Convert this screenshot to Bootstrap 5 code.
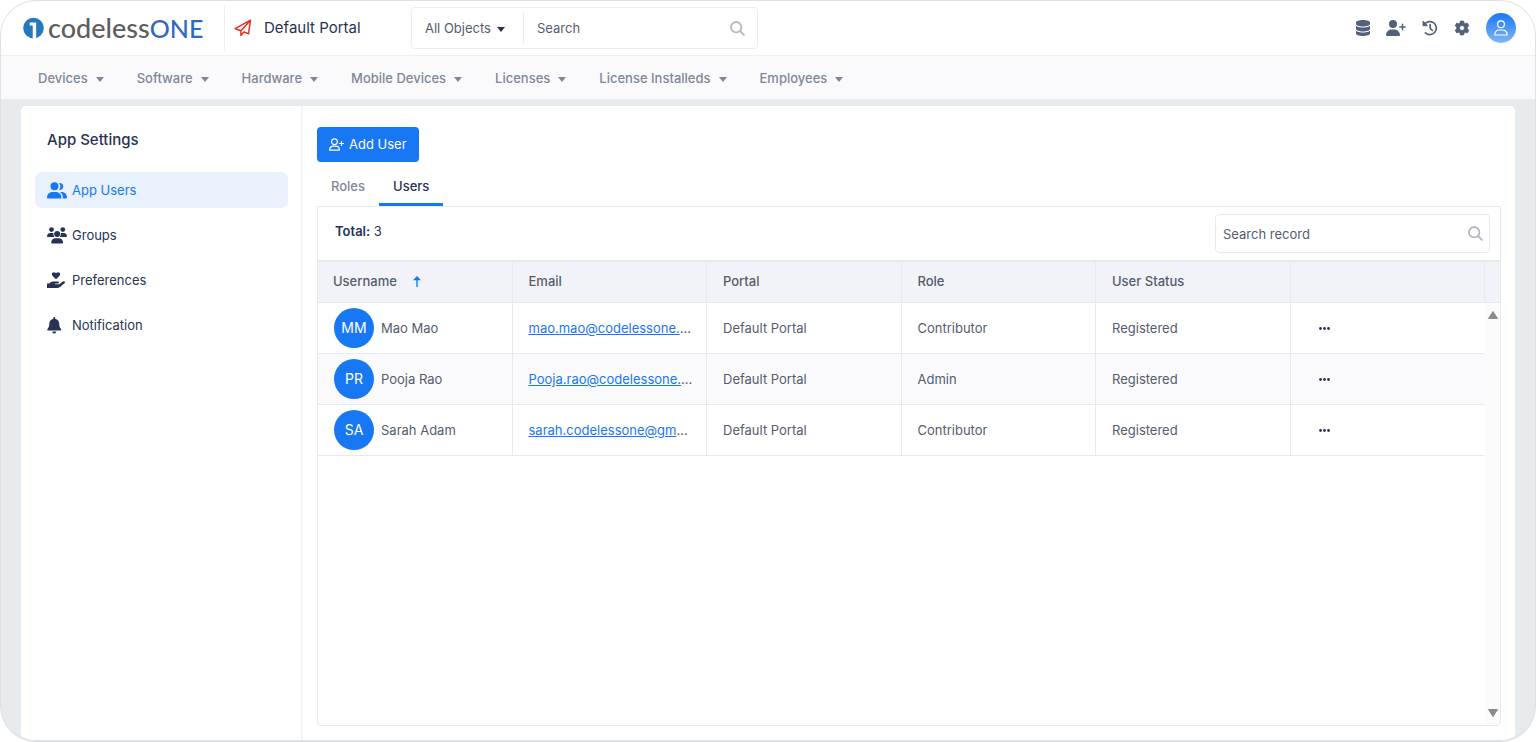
<!DOCTYPE html>
<html lang="en">
<head>
<meta charset="utf-8">
<meta name="viewport" content="width=device-width, initial-scale=1">
<title>App Users</title>
<link href="https://cdn.jsdelivr.net/npm/bootstrap@5.3.0/dist/css/bootstrap.min.css" rel="stylesheet">
<style>
  :root { --ink: #283353; --body: #555c6e; --muted: #7f8798; --line: #e6e9ed; --blue: #1877f2; }
  body { font-family: Inter, "Liberation Sans", sans-serif; font-size: 13px; line-height: 20px; color: var(--body); background: #fff; }
  svg { display: block; flex: none; }
  .app-frame { min-height: 100vh; background: #e7ebed; border: 1px solid #dfe1e3; border-bottom-width: 2px; border-radius: 36px; overflow: hidden; }
  .top-bar { height: 55px; background: #fff; border-bottom: 1px solid #f0f0f3; padding: 0 19px 0 22px; }
  .brand { width: 201px; font-family: Lato, sans-serif; font-size: 27px; line-height: 32px; font-weight: 500; color: #5c5e60; text-decoration: none; }
  .brand b { font-size: 25px; font-weight: 500; color: #2f69c0; }
  .portal { height: 46px; border-left: 1px solid #efeff2; padding-left: 9px; gap: 12px; font-size: 15px; color: var(--ink); width: 187px; text-decoration: none; }
  .finder { width: 347px; height: 42px; border: 1px solid #ececef; border-radius: 4px; }
  .finder .btn { width: 112px; flex: none; height: 32px; border: 0; border-right: 1px solid #ececef; border-radius: 0; padding: 0 0 0 13px; font-size: 13px; line-height: 32px; color: var(--body); text-align: left; }
  .dropdown-toggle::after { border-width: 5px 4px 0; vertical-align: 1px; }
  .finder .btn::after { color: var(--ink); margin-left: 6px; }
  .plain-input { border: 0; outline: 0; background: none; min-width: 0; font-size: 13px; color: var(--body); }
  .plain-input::placeholder { color: var(--body); opacity: 1; }
  .finder .plain-input { padding-left: 13px; }
  .icon-btn { border: 0; background: none; padding: 0; color: #536079; }
  .face { width: 30px; height: 30px; border-radius: 50%; background: linear-gradient(#1877f2, #82b6f8); color: #fff; }
  .menu-bar { height: 43px; background: #fafafc; padding-left: 37px; gap: 33px; }
  .menu-bar a { color: var(--muted); font-weight: 500; text-decoration: none; white-space: nowrap; }
  .menu-bar a::after { margin-left: 8px; }
  .sheet { margin: 7px 20px 0; background: #fff; border-radius: 5px 5px 0 0; }
  .side { width: 282px; border-right: 2px solid #f5f6f8; padding: 22px 13px 22px 14px; }
  .side h1 { font-size: 15px; line-height: 24px; font-weight: 500; color: var(--ink); margin: 0 0 20px 12px; }
  .side a { height: 36px; padding-left: 12px; gap: 5px; border-radius: 7px; color: var(--ink); text-decoration: none; }
  .side a.active { background: #e8f1fc; color: var(--blue); }
  .side nav { gap: 9px; }
  .work { padding: 21px 14px 14px; min-width: 0; }
  .add-btn { background: var(--blue); border: 0; border-radius: 4px; height: 35px; padding: 0 12px; gap: 5px; font-size: 13px; color: #fff; }
  .tabs { margin-top: 9px; }
  .tabs button { border: 0; background: none; height: 35px; padding: 0 14px 3px; font-weight: 500; color: var(--muted); border-bottom: 3px solid transparent; }
  .tabs .active { color: var(--ink); border-color: var(--blue); }
  .grid-box { border: 1px solid var(--line); border-radius: 0 0 4px 4px; }
  .grid-top { height: 55px; padding: 0 10px 0 17px; border-bottom: 2px solid #e6e8eb; }
  .grid-top p { color: var(--ink); padding-bottom: 5px; }
  .record-find { width: 275px; height: 39px; border: 1px solid var(--line); border-radius: 4px; padding: 0 6px 0 7px; }
  .people-wrap { min-width: 0; }
  .people { table-layout: fixed; margin: 0; border-collapse: separate; border-spacing: 0; width: 100%; }
  .people th, .people td { border-right: 1px solid var(--line); border-bottom: 1px solid var(--line); padding: 0 12px 0 16px; white-space: nowrap; overflow: hidden; text-overflow: ellipsis; }
  .people th { height: 41px; background: #f2f3f8; font-weight: 500; padding-bottom: 2px; }
  .people th:first-child { padding-left: 15px; }
  .people td { height: 51px; }
  .people td:last-child { border-right-color: transparent; padding-left: 28px; }
  .people tr:nth-child(2) td { background: #fafafc; }
  .people a { color: var(--blue); }
  .initials { width: 40px; height: 40px; border-radius: 50%; background: var(--blue); color: #fff; font-size: 14px; margin-right: 7px; }
  .rail { width: 15px; flex: none; background: #fbfbfb; color: #8b8b8b; }
  .rail-head { height: 41px; background: #f2f3f8; border-bottom: 1px solid var(--line); align-self: stretch; }
</style>
</head>
<body>
<div class="app-frame d-flex flex-column">
  <header class="top-bar d-flex align-items-center">
    <a href="#" class="brand d-flex align-items-center">
      <svg class="me-1" width="21" height="22" viewBox="0 0 22 22"><circle cx="11" cy="11" r="10.8" fill="#2279bf"/><path d="M7 5.2h6.8V22h-3.6V8.3H7z" fill="#fff"/></svg>
      <span>codeless</span><b>ONE</b>
    </a>
    <a href="#" class="portal d-flex align-items-center">
      <svg width="18" height="18" viewBox="0 0 18 18" fill="none" stroke="#dc3426" stroke-width="1.5" stroke-linejoin="round"><path d="M1.2 9.700 16.500 1.200l-2 13.600-4.600-1.900-3 3.500v-4.700zM6.900 11.700l9.600-10.500M1.200 9.700l5.700 2"/></svg>
      Default Portal
    </a>
    <form class="finder d-flex align-items-center" role="search">
      <button type="button" class="btn dropdown-toggle" data-bs-toggle="dropdown">All Objects</button>
      <input class="plain-input flex-grow-1" type="text" placeholder="Search" aria-label="Search">
      <button type="button" class="icon-btn me-2 pe-1" aria-label="Run search"><svg width="15" height="15" viewBox="0 0 15 15" fill="none" stroke="#b4b8c2" stroke-width="1.8"><circle cx="6.2" cy="6.2" r="5.2"/><path d="m10 10 4.5 4.5"/></svg></button>
    </form>
    <div class="ms-auto d-flex align-items-center">
      <button class="icon-btn me-3" aria-label="Data"><svg width="14" height="16" viewBox="0 0 448 512" fill="currentColor"><path d="M448 80v48c0 44.200-100.300 80-224 80S0 172.200 0 128V80C0 35.800 100.300 0 224 0s224 35.800 224 80zM393.200 214.700c20.800-7.400 39.900-16.900 54.800-28.600V288c0 44.200-100.300 80-224 80S0 332.200 0 288V186.100c14.900 11.800 34 21.200 54.800 28.600C99.700 230.700 159.500 240 224 240s124.300-9.300 169.200-25.300zM0 346.100c14.900 11.800 34 21.200 54.800 28.600C99.700 390.700 159.500 400 224 400s124.300-9.300 169.200-25.300c20.800-7.400 39.900-16.900 54.800-28.600V432c0 44.200-100.300 80-224 80S0 476.200 0 432v-85.900z"/></svg></button>
      <button class="icon-btn me-3" aria-label="Invite"><svg width="20" height="16" viewBox="0 0 640 512" fill="currentColor"><path d="M96 128a128 128 0 1 1 256 0 128 128 0 1 1-256 0zM0 482.300C0 383.800 79.800 304 178.300 304h91.400C368.200 304 448 383.800 448 482.300c0 16.400-13.300 29.700-29.700 29.700H29.700C13.300 512 0 498.700 0 482.300zM504 312v-64h-64c-13.300 0-24-10.700-24-24s10.700-24 24-24h64v-64c0-13.300 10.700-24 24-24s24 10.700 24 24v64h64c13.300 0 24 10.700 24 24s-10.700 24-24 24h-64v64c0 13.300-10.700 24-24 24s-24-10.700-24-24z"/></svg></button>
      <button class="icon-btn me-3" aria-label="History"><svg width="16" height="16" viewBox="0 0 16 16" fill="none" stroke="currentColor" stroke-width="1.700" stroke-linecap="round" stroke-linejoin="round"><path d="M2.500 4.400A6.500 6.500 0 1 1 3.400 12.800M8.200 4.700v3.600l2.200 2.200"/><path d="M1 1.500v4.200h4.200z" fill="currentColor" stroke-width="1"/></svg></button>
      <button class="icon-btn me-3" aria-label="Settings"><svg width="16" height="16" viewBox="0 0 16 16"><path fill="currentColor" fill-rule="evenodd" stroke="currentColor" stroke-width=".8" stroke-linejoin="round" d="M6.500 1h3l.5 2 1.300.75 2-.65 1.500 2.600L13.300 7.200v1.600l1.500 1.500-1.500 2.600-2-.65L10 13l-.5 2h-3L6 13l-1.300-.75-2 .65-1.500-2.600L2.700 8.800V7.200L1.200 5.700l1.500-2.600 2 .65L6 3zM8 5.500a2.500 2.500 0 1 0 0 5 2.500 2.500 0 0 0 0-5z"/></svg></button>
      <button class="icon-btn face d-flex align-items-center justify-content-center" aria-label="Account"><svg width="14" height="16" viewBox="0 0 14 16" fill="none" stroke="#fff" stroke-width="1.200"><circle cx="7" cy="4.200" r="3.400"/><path d="M.8 15c0-3.300 2.200-5 4.700-5h3c2.500 0 4.700 1.700 4.700 5z" stroke-linejoin="round"/></svg></button>
    </div>
  </header>
  <nav class="menu-bar d-flex align-items-center" aria-label="Objects">
    <a href="#" class="dropdown-toggle">Devices</a>
    <a href="#" class="dropdown-toggle">Software</a>
    <a href="#" class="dropdown-toggle">Hardware</a>
    <a href="#" class="dropdown-toggle">Mobile Devices</a>
    <a href="#" class="dropdown-toggle">Licenses</a>
    <a href="#" class="dropdown-toggle">License Installeds</a>
    <a href="#" class="dropdown-toggle">Employees</a>
  </nav>
  <div class="sheet d-flex flex-grow-1">
    <aside class="side flex-shrink-0">
      <h1>App Settings</h1>
      <nav class="d-flex flex-column" aria-label="App settings">
        <a href="#" class="active d-flex align-items-center"><svg width="20" height="17" viewBox="0 0 20 17" fill="currentColor"><circle cx="7.500" cy="4.300" r="4"/><path d="M0 15.500C0 12.300 2.500 10 5.600 10h3.200c3.100 0 5.600 2.300 5.600 5.500 0 .6-.4 1-1 1H1c-.6 0-1-.4-1-1z"/><path d="M12 7.900a5.200 5.200 0 0 0 0-6.800 3.500 3.500 0 1 1 0 6.800zM12.800 10h1.900c3 0 5.300 2.300 5.300 5.400 0 .6-.5 1.100-1.100 1.100h-3.200c.7-2.500-.5-5-2.900-6.500z"/></svg>App Users</a>
        <a href="#" class="d-flex align-items-center"><svg width="20" height="17" viewBox="0 0 20 17" fill="currentColor"><circle cx="4.500" cy="2.600" r="2.400"/><circle cx="15.800" cy="2.600" r="2.400"/><circle cx="10.200" cy="7" r="3"/><path d="M0 9.300C0 7.200 1.600 6 3.400 6h1.800c.5 0 .9.100 1.300.3-.2 1.600.2 2.600 1 3.700H.7c-.4 0-.7-.3-.7-.7zM20 9.300C20 7.200 18.400 6 16.900 6H15c-.5 0-.8.100-1.200.3.200 1.600-.2 2.600-1 3.700h6.500c.4 0 .7-.3.7-.7zM4.200 15.600c0-2.500 1.800-4.400 4.200-4.400h3.500c2.400 0 4.200 1.900 4.200 4.400 0 .5-.4.900-.9.900H5.100c-.5 0-.9-.4-.9-.9z"/></svg>Groups</a>
        <a href="#" class="d-flex align-items-center"><svg width="20" height="17" viewBox="0 0 20 17" fill="currentColor"><path d="M9 7.200 5.600 3.900C3.900 2.100 5.500-.1 7.500.4 8.200.5 8.700.9 9 1.300c.3-.4.800-.8 1.500-.9 2-.5 3.600 1.700 1.900 3.500zM0 11.500h2.200l1.500-1.200c.8-.6 1.500-.8 2.400-.8h4.700c1.500 0 1.500 2 0 2H8v.8h4l3.900-2.800c1.400-1 2.800.8 1.600 1.800L13 15c-.9.700-1.700 1-2.800 1H0z"/></svg>Preferences</a>
        <a href="#" class="d-flex align-items-center"><svg width="20" height="17" viewBox="0 0 20 17" fill="currentColor"><path d="M6.300 1.700V1.100c0-1.400 1.900-1.400 1.900 0v.6c2.500.5 4 2.500 4 4.900 0 2.500.5 3.900 1.700 5.200.7.800.3 1.700-.6 1.700H1.200c-.9 0-1.300-.9-.6-1.700C1.800 10.500 2.300 9.100 2.300 6.600c0-2.400 1.500-4.400 4-4.900zM5.300 14.400h3.900c-.2 2.700-3.700 2.700-3.900 0z"/></svg>Notification</a>
      </nav>
    </aside>
    <main class="work d-flex flex-column flex-grow-1">
      <button class="btn add-btn d-inline-flex align-items-center align-self-start"><svg width="15" height="13" viewBox="0 0 15 13" fill="none" stroke="#fff" stroke-width="1.200"><circle cx="5.500" cy="3.700" r="2.900"/><path d="M.6 12.200c0-2.500 1.600-4 3.600-4h2.600c2 0 3.600 1.500 3.600 4zM12.500 3v5M10 5.500h5" stroke-linejoin="round"/></svg>Add User</button>
      <div class="tabs d-flex" role="tablist">
        <button role="tab">Roles</button>
        <button role="tab" class="active" aria-selected="true">Users</button>
      </div>
      <section class="grid-box d-flex flex-column flex-grow-1">
        <div class="grid-top d-flex align-items-center justify-content-between">
          <p class="mb-0"><span class="fw-semibold">Total:</span> 3</p>
          <div class="record-find d-flex align-items-center">
            <input class="plain-input flex-grow-1 p-0" type="text" placeholder="Search record" aria-label="Search record">
            <svg width="15" height="15" viewBox="0 0 15 15" fill="none" stroke="#b4b8c2" stroke-width="1.800"><circle cx="6.200" cy="6.200" r="5.200"/><path d="m10 10 4.500 4.500"/></svg>
          </div>
        </div>
        <div class="d-flex flex-grow-1">
          <div class="people-wrap flex-grow-1">
            <table class="people">
              <thead><tr>
                <th><span class="d-flex align-items-center">Username<svg class="ms-3" width="8" height="11" viewBox="0 0 8 11"><path d="M4 11V2" stroke="#1877f2" stroke-width="1.400"/><path d="M0 4.200 4 0l4 4.200z" fill="#1877f2"/></svg></span></th>
                <th>Email</th><th>Portal</th><th>Role</th><th>User Status</th><th aria-label="Actions"></th>
              </tr></thead>
              <tbody>
                <tr><td><span class="d-flex align-items-center"><span class="initials d-flex align-items-center justify-content-center">MM</span>Mao Mao</span></td><td><a href="#">mao.mao@codelessone.com</a></td><td>Default Portal</td><td>Contributor</td><td>Registered</td><td><button class="icon-btn d-block" aria-label="More"><svg width="11" height="3" viewBox="0 0 11 3" fill="#283353"><circle cx="1.500" cy="1.500" r="1.400"/><circle cx="5.500" cy="1.500" r="1.400"/><circle cx="9.500" cy="1.500" r="1.400"/></svg></button></td></tr>
                <tr><td><span class="d-flex align-items-center"><span class="initials d-flex align-items-center justify-content-center">PR</span>Pooja Rao</span></td><td><a href="#">Pooja.rao@codelessone.com</a></td><td>Default Portal</td><td>Admin</td><td>Registered</td><td><button class="icon-btn d-block" aria-label="More"><svg width="11" height="3" viewBox="0 0 11 3" fill="#283353"><circle cx="1.500" cy="1.500" r="1.400"/><circle cx="5.500" cy="1.500" r="1.400"/><circle cx="9.500" cy="1.500" r="1.400"/></svg></button></td></tr>
                <tr><td><span class="d-flex align-items-center"><span class="initials d-flex align-items-center justify-content-center">SA</span>Sarah Adam</span></td><td><a href="#">sarah.codelessone@gmail.com</a></td><td>Default Portal</td><td>Contributor</td><td>Registered</td><td><button class="icon-btn d-block" aria-label="More"><svg width="11" height="3" viewBox="0 0 11 3" fill="#283353"><circle cx="1.500" cy="1.500" r="1.400"/><circle cx="5.500" cy="1.500" r="1.400"/><circle cx="9.500" cy="1.500" r="1.400"/></svg></button></td></tr>
              </tbody>
            </table>
          </div>
          <div class="rail d-flex flex-column align-items-center">
            <div class="rail-head"></div>
            <svg class="mt-2" width="10" height="8" viewBox="0 0 10 8"><path d="M5 .5 9.500 7.500h-9z" fill="currentColor" stroke="currentColor" stroke-linejoin="round"/></svg>
            <svg class="mt-auto mb-2" width="10" height="8" viewBox="0 0 10 8"><path d="M5 7.500.5.500h9z" fill="currentColor" stroke="currentColor" stroke-linejoin="round"/></svg>
          </div>
        </div>
      </section>
    </main>
  </div>
</div>
<script src="https://cdn.jsdelivr.net/npm/bootstrap@5.3.0/dist/js/bootstrap.bundle.min.js"></script>
</body>
</html>
